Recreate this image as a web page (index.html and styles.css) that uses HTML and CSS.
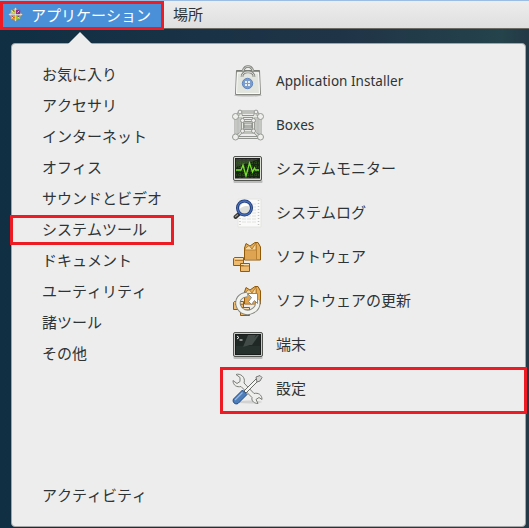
FILE: index.html
```html
<!DOCTYPE html>
<html lang="ja">
<head>
<meta charset="utf-8">
<title>アプリケーション</title>
<link rel="stylesheet" href="styles.css">
</head>
<body>
<header class="topbar">
  <div class="menu-button active">
    <svg class="logo" viewBox="0 0 16 16">
      <path d="M8 .5L11 4H5z" fill="#e3b76a"/><path d="M8 15.500L11 12H5z" fill="#f0a51e"/>
      <path d="M.5 8L4 5v6z" fill="#c9b0d8"/><path d="M15.500 8L12 5v6z" fill="#efb45c"/>
      <path d="M3 3h4.700v4.700H3z" fill="#c5c75a"/><path d="M8.300 3H13v4.700H8.300z" fill="#92317d"/>
      <path d="M3 8.300h4.700V13H3z" fill="#ee9a2e"/><path d="M8.300 8.300H13V13H8.300z" fill="#a6c535"/>
      <path d="M8 1v14M1 8h14" stroke="#f5e9ee" stroke-width=".7"/>
      <path d="M4 4l2 2M12 4l-2 2M4 12l2-2M12 12l-2-2" stroke="#f5e9ee" stroke-width=".8"/>
      <path d="M5 3l1.500 2M4.500 9.500l2 2M10 10h2" stroke="#6d3568" stroke-width="1"/>
    </svg>
    <span>アプリケーション</span>
  </div>
  <div class="menu-button places">場所</div>
</header>
<main class="popup">
  <nav class="categories">
    <div>お気に入り</div>
    <div>アクセサリ</div>
    <div>インターネット</div>
    <div>オフィス</div>
    <div>サウンドとビデオ</div>
    <div class="selected">システムツール</div>
    <div>ドキュメント</div>
    <div>ユーティリティ</div>
    <div>諸ツール</div>
    <div>その他</div>
    <div class="activities">アクティビティ</div>
  </nav>
  <section class="apps">
    <div class="app">
      <svg viewBox="0 0 32 32">
        <ellipse cx="16" cy="30.300" rx="14" ry="1.300" fill="#bbb"/>
        <path d="M4.500 5.500h23L28.500 29.500h-25z" fill="#e2e4de" stroke="#858780"/>
        <path d="M5.500 8h21l1 20.500h-23z" fill="none" stroke="#fafaf8"/>
        <path d="M4.500 6h23" stroke="#777b73" stroke-width="1.500"/>
        <path d="M11 6C12 2.500 14 1.500 16 1.500S20 2.500 21 6" fill="none" stroke="#7d8179" stroke-width="2.500"/>
        <path d="M11 6C12 2.500 14 1.500 16 1.500S20 2.500 21 6" fill="none" stroke="#d9dbd5"/>
        <path d="M10 12c0-4 3-5 6-5s6 1 6 5" fill="none" stroke="#7d8179" stroke-width="2.600"/>
        <path d="M10 12c0-4 3-5 6-5s6 1 6 5" fill="none" stroke="#f0f0ed"/>
        <circle cx="15.500" cy="18.500" r="5.200" fill="#7b9dcd" stroke="#6288bf"/>
        <path d="M13 16h2v2h-2zM16 16h2v2h-2zM13 19h2v2h-2zM16 19h2v2h-2z" fill="#e8eef6"/>
      </svg><span class="latin">Application Installer</span>
    </div>
    <div class="app">
      <svg viewBox="0 0 32 32">
        <g fill="none" stroke="#92958f" stroke-width="3"><path d="M4 7.500h24v21H4zM8 3h16v20H8zM10.500 11.500h11v10h-11zM4 7.500L8 3M28 7.500L24 3M4 28.500l7-7M28 28.500l-7-7M8 3l3 8M24 3l-3 8"/></g>
        <g fill="none" stroke="#e8eae4" stroke-width="1.200"><path d="M4 7.500h24v21H4zM8 3h16v20H8zM10.500 11.500h11v10h-11zM4 7.500L8 3M28 7.500L24 3M4 28.500l7-7M28 28.500l-7-7M8 3l3 8M24 3l-3 8"/></g>
        <path d="M12 14h8v5h-8zM12 17h8" fill="#d8dad5" stroke="#868a83"/>
        <g fill="#eff0ed" stroke="#969a93"><circle cx="3.500" cy="7.500" r="3"/><circle cx="28.500" cy="7.500" r="3"/><circle cx="3.500" cy="28" r="3"/><circle cx="28.500" cy="28" r="3"/><circle cx="8" cy="3" r="1.900"/><circle cx="24" cy="3" r="1.900"/><circle cx="10.500" cy="11.500" r="2"/><circle cx="21.500" cy="11.500" r="2"/><circle cx="10.500" cy="22" r="2"/><circle cx="21.500" cy="22" r="2"/></g>
      </svg><span class="latin">Boxes</span>
    </div>
    <div class="app">
      <svg viewBox="0 0 32 32">
        <rect x="1.500" y="27" width="29" height="3" rx="1" fill="#bcbcbc"/>
        <rect x="1.500" y="3.500" width="28" height="24" rx="1.500" fill="#deded9" stroke="#52554f"/>
        <rect x="3.500" y="5.500" width="24" height="19.500" fill="#172612" stroke="#222"/>
        <path d="M4 6h23L4 14z" fill="#36452f"/>
        <path d="M4 10h23M4 14h23M4 18h23M4 22h23M8 6v19M12 6v19M16 6v19M20 6v19M24 6v19" stroke="#397021" stroke-width=".7" stroke-dasharray="1 1"/>
        <path d="M4 17h5l2-5 3 11 3.500-13 3 9 2-4 1 2H27" fill="none" stroke="#78e22c" stroke-width="1.300"/>
      </svg><span>システムモニター</span>
    </div>
    <div class="app">
      <svg viewBox="0 0 32 32">
        <path d="M6 2h23v28H6z" fill="#fafafa" stroke="#e4e4e0"/>
        <path d="M8 3v26M26.500 3v26" stroke="#c5c7c2" stroke-width="1.500" stroke-dasharray="1 2"/>
        <path d="M10 7h14M10 10h14M10 13h14M10 16h14M10 19h14M10 22h14M10 25h14" stroke="#e2e2de" stroke-dasharray="4 1"/>
        <path d="M7.500 16.500l-4 3.500" stroke="#30302e" stroke-width="4" stroke-linecap="round"/>
        <path d="M6 17.500l-3 2.500" stroke="#999" stroke-width="1.200"/>
        <circle cx="12.500" cy="11" r="7" fill="#dddeda" stroke="#1d3874" stroke-width="3"/>
        <circle cx="12.500" cy="11" r="7" fill="none" stroke="#466fbd" stroke-width="1.300"/>
        <path d="M8 11.500c0-7 9-6 9-2-4-1-6 0-9 2z" fill="#fff"/>
      </svg><span>システムログ</span>
    </div>
    <div class="app">
      <svg viewBox="0 0 32 32">
        <g id="packages"><path d="M12.500 7L14 2.500l4 2.500 5-3.500h3L28.500 6v13h-16z" fill="#e5ae5c" stroke="#8f5907"/>
        <path d="M17 4.500L20 8l4-6v7H13V7.500z" fill="#f7d9a3" stroke="#a87022" stroke-width=".8"/><path d="M13 10h11.500v8.500H13z" fill="#dfa452"/><path d="M24.500 4v15" stroke="#bb812f"/>
        <path d="M2.500 16.500h9v8h-10v-7zM8.500 22.500h9v8h-9z" fill="#edbc70" stroke="#925b0d"/><path d="M3 19.500h8M9 25h8" stroke="#b87b2b"/><path d="M3 17.500h8M9 23.500h8" stroke="#fae0b0"/></g>
      </svg><span>ソフトウェア</span>
    </div>
    <div class="app">
      <svg viewBox="0 0 32 32">
        <use href="#packages"/>
        <path d="M15 9.500C8 10 4.500 15 6.500 21c2 6 9 8 14 5 4-2 6-6 5-11" fill="none" stroke="#85857f" stroke-width="5.500"/>
        <path d="M15 9.500C8 10 4.500 15 6.500 21c2 6 9 8 14 5 4-2 6-6 5-11" fill="none" stroke="#f2f2ef" stroke-width="3.500"/>
        <path d="M15.500 8.500h10v10l-3-3-3 4-3-3 3-4z" fill="#fff" stroke="#898983"/>
      </svg><span>ソフトウェアの更新</span>
    </div>
    <div class="app">
      <svg viewBox="0 0 32 32">
        <rect x="1.500" y="27" width="29" height="3" rx="1" fill="#bcbcbc"/>
        <rect x="1.500" y="3.500" width="29" height="24" rx="1.500" fill="#c9cac5" stroke="#50534e"/>
        <rect x="3.500" y="5.500" width="25" height="20" fill="#202825" stroke="#181c1a"/>
        <path d="M16 6h8l-6 10-7 2zM25 6h2l-7 10h-4z" fill="#424b47"/>
        <path d="M4 18h24M4 20h24M4 22h24M4 24h24" stroke="#35423c" stroke-width=".7"/>
        <path d="M5 7l2 1.500-2 1.500M7.500 11h3" fill="none" stroke="#eee"/>
      </svg><span>端末</span>
    </div>
    <div class="app settings">
      <svg viewBox="0 0 32 32">
        <ellipse cx="17" cy="29" rx="13" ry="1.500" fill="#d2d2d2"/>
        <path d="M4 1.500l4 3v4l-3 2-4-3c0 5 4 7 8 6l11 11c-1 4 3 6 6 6l-2-4 3-2 3 2c0-5-4-7-8-6L12 10c2-6-4-10-8-8.500z" fill="#eeefed" stroke="#7b7e78"/>
        <path d="M12 18L25 5l3-2 1 1-2 3-13 13z" fill="#f6f6f4" stroke="#696d68"/>
        <path d="M24 4l4-1.500 2 2L28 8l-3 1z" fill="#d9dad7" stroke="#777"/>
        <path d="M10.500 17l4.500 4.500L6 30.500c-3 1.500-6-1.500-4.500-4.500z" fill="#4d7eba" stroke="#204a87"/>
        <path d="M10.500 19.500l-7.500 7.500" stroke="#96b9e2" stroke-width="1.300"/>
      </svg><span>設定</span>
    </div>
  </section>
</main>
</body>
</html>
```

FILE: styles.css
```css
* { box-sizing: border-box; }
body {
  margin: 0;
  width: 529px;
  height: 528px;
  overflow: hidden;
  background: linear-gradient(90deg, #102f43, #203447 65%, #24434b 95%, #243846);
  color: #2e3436;
  font: 15px/31px "Noto Sans CJK JP", sans-serif;
  font-kerning: none;
}
svg { display: block; flex: none; }
.topbar {
  display: flex;
  height: 29px;
  border-top: 1px solid #9bbce3;
  border-bottom: 1px solid #6d6b66;
  background: linear-gradient(#ededed, #dfdfdf);
}
.menu-button { display: flex; align-items: center; }
.active {
  width: 164px;
  height: 29px;
  padding-left: 5px;
  gap: 8px;
  border: 3px solid #ed1c24;
  background: #4a90d9;
  color: #fff;
}
.active span { margin-top: -2px; }
.active .logo { width: 15px; height: 15px; margin-top: -2px; }
.places { height: 25px; padding-left: 9px; }
.popup {
  position: relative;
  display: flex;
  width: 515px;
  height: 484px;
  margin: 14px 0 0 11px;
  border: 1px solid #a3a4a5;
  border-radius: 4px;
  background: #ededed;
}
.popup::before {
  content: "";
  position: absolute;
  left: 56px;
  top: -12px;
  border: 12px solid transparent;
  border-top: 0;
  border-bottom-color: #ededed;
}
.categories { flex: none; width: 208px; padding-top: 14px; }
.categories div { height: 31px; padding-left: 30px; }
.categories .selected {
  width: 164px;
  height: 30px;
  margin: 2px 0 -1px -2px;
  padding-left: 29px;
  border: 3px solid #ed1c24;
  line-height: 21px;
}
.categories .activities { margin-top: 111px; }
.apps { flex: none; width: 307px; padding-top: 15px; }
.app {
  display: flex;
  align-items: center;
  gap: 12px;
  height: 44px;
  padding-left: 12px;
}
.app svg { width: 32px; height: 32px; }
.app span { margin-top: -4px; }
.app .latin {
  margin-top: 0;
  font-family: "Noto Sans", sans-serif;
  font-size: 13.5px;
  letter-spacing: .03px;
}
.settings {
  height: 47px;
  padding-left: 9px;
  border: 3px solid #ed1c24;
}
.settings svg { margin-top: -3px; }
.settings span { margin-top: -7px; }
```
